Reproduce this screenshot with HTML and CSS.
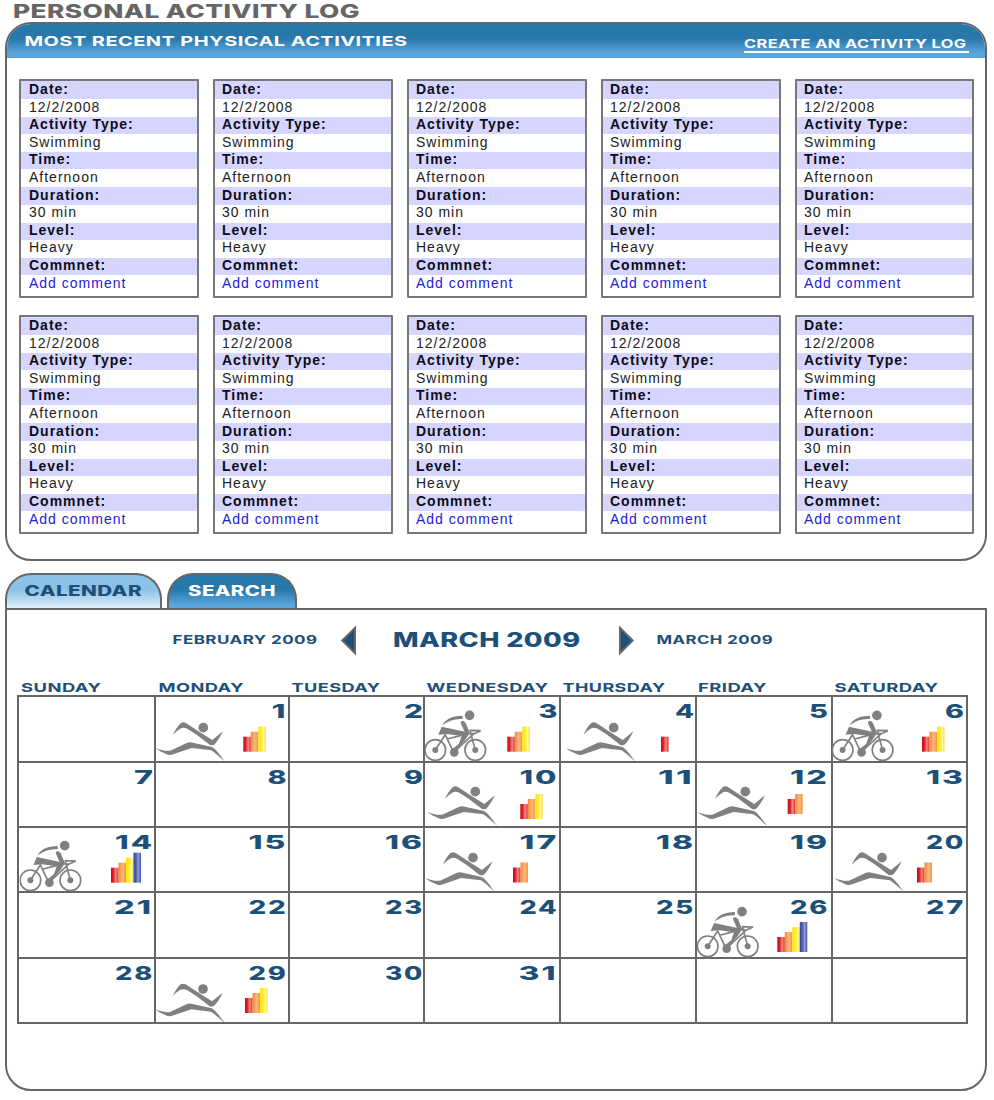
FILE: index.html
```html
<!DOCTYPE html>
<html lang="en">
<head>
<meta charset="utf-8">
<title>Personal Activity Log</title>
<link rel="stylesheet" href="styles.css">
</head>
<body>
<svg class="defs" width="0" height="0" aria-hidden="true">
  <defs>
    <linearGradient id="red"><stop offset="0" stop-color="#c01018"/><stop offset=".3" stop-color="#e01c22"/><stop offset=".65" stop-color="#f08a86"/><stop offset="1" stop-color="#dc2a2c"/></linearGradient>
    <linearGradient id="orange"><stop offset="0" stop-color="#f58634"/><stop offset=".55" stop-color="#fbb87c"/><stop offset="1" stop-color="#f59440"/></linearGradient>
    <linearGradient id="yellow"><stop offset="0" stop-color="#ffe60a"/><stop offset=".5" stop-color="#ffee38"/><stop offset=".7" stop-color="#fff6a8"/><stop offset="1" stop-color="#fbe03c"/></linearGradient>
    <linearGradient id="blue"><stop offset="0" stop-color="#3446a0"/><stop offset=".3" stop-color="#4c5cae"/><stop offset=".65" stop-color="#8e9ad0"/><stop offset="1" stop-color="#4355a8"/></linearGradient>
    <symbol id="swim" viewBox="466 96 210 120">
      <circle cx="610" cy="113" r="14.5"/>
      <path d="M519 134C526 120 534 107 543 99Q549 95 558 99L598 125L637 150L669 124C663 136 655 151 645 162Q638 168 629 164L590 134L562 116Q549 111 541 116Q529 123 519 134Z"/>
      <path d="M467 174C482 180 498 184 511 182L562 158Q570 155 579 158L636 171C652 180 662 200 676 215C660 204 650 191 634 181L575 174L522 192Q508 198 497 191C486 187 475 182 467 174Z"/>
    </symbol>
    <symbol id="bike" viewBox="28 60 190 155">
      <circle cx="164" cy="76" r="14.5"/>
      <path d="M82 105C92 88 110 77 143 77V87C120 85 104 91 82 105Z"/>
      <path d="M137 98Q137 91 146 93L152 99L164 127L152 133Z"/>
      <path d="M70 134L80 110L165 128L151 149L118 187L108 181L132 161L140 138L96 132Z"/>
      <g class="line"><circle cx="61" cy="180" r="31"/><circle cx="181" cy="180" r="31"/><path d="M61 180L91 134L116 187L177 131M97 147L139 136M165 121L181 180M164 121L197 122L178 131H160"/></g>
      <circle cx="61" cy="180" r="9"/><circle cx="181" cy="180" r="9"/><circle cx="118" cy="187" r="13"/>
    </symbol>
  </defs>
</svg>
<main>
  <h1 class="title"><svg width="346" height="14"><text class="wide fs-title" x="-1" y="13.5" textLength="347" lengthAdjust="spacingAndGlyphs">PERSONAL ACTIVITY LOG</text></svg></h1>
  <section class="panel">
    <header class="head">
      <svg width="382" height="10"><text class="wide fs-head" x="-1.5" y="9.7" textLength="383" lengthAdjust="spacingAndGlyphs">MOST RECENT PHYSICAL ACTIVITIES</text></svg>
      <a class="create"><svg width="225" height="9"><text class="wide fs-small" x="0" y="8" textLength="222.5" lengthAdjust="spacingAndGlyphs">CREATE AN ACTIVITY LOG</text></svg></a>
    </header>
    <div class="cards" id="cards"></div>
  </section>
  <nav class="tabs">
    <a class="tab tab-calendar"><svg width="117" height="11"><text class="wide fs-tab" x="-0.5" y="10" textLength="117.5" lengthAdjust="spacingAndGlyphs">CALENDAR</text></svg></a>
    <a class="tab tab-search"><svg width="87" height="11"><text class="wide fs-tab" x="-1" y="10" textLength="88" lengthAdjust="spacingAndGlyphs">SEARCH</text></svg></a>
  </nav>
  <section class="calendar">
    <div class="months">
      <svg class="prev" width="144" height="9"><text class="wide fs-small" x="-0.5" y="8" textLength="145" lengthAdjust="spacingAndGlyphs">FEBRUARY 2009</text></svg>
      <svg class="arrow" width="15" height="29"><path d="M1.3 14.5L14 1.8V27.2Z"/></svg>
      <svg class="current" width="186" height="15"><text class="wide fs-month" x="-1" y="14.3" textLength="187.5" lengthAdjust="spacingAndGlyphs">MARCH 2009</text></svg>
      <svg class="arrow" width="15" height="29"><path d="M13.7 14.5L1 1.8V27.2Z"/></svg>
      <svg class="next" width="115" height="9"><text class="wide fs-small" x="-0.5" y="8" textLength="116.5" lengthAdjust="spacingAndGlyphs">MARCH 2009</text></svg>
    </div>
    <div class="weekdays" id="weekdays"></div>
    <div class="days" id="days"></div>
  </section>
</main>
<script src="app.js"></script>
</body>
</html>
```
FILE: styles.css
```css
body { margin: 0; background: #fff; font-family: "Liberation Sans", Arial, sans-serif; }
main { width: 982px; padding-left: 5px; }
svg { display: block; overflow: visible; flex: none; }
.defs { position: absolute; }

.wide { font-family: Inter, "Liberation Sans", sans-serif; font-weight: 700; letter-spacing: 0.3px; fill: #1d5079; }
.fs-title { font-size: 18.6px; font-weight: 800; fill: #666; }
.fs-head { font-size: 13.4px; fill: #fff; }
.fs-small { font-size: 11.6px; }
.fs-tab { font-size: 14px; font-weight: 800; }
.fs-month { font-size: 20.2px; font-weight: 800; }
.fs-weekday { font-size: 12.4px; }
.fs-day { font-size: 19px; font-weight: 800; letter-spacing: 0; }
.fs-day.two { letter-spacing: 1.2px; }

.title { margin: 0; padding: 4px 0 4px 9px; }

.panel { box-sizing: border-box; height: 539px; border: 2px solid #666; border-radius: 26px; overflow: hidden; }
.head { display: flex; justify-content: space-between; align-items: flex-start; box-sizing: border-box; height: 34px; padding: 12px 16px 0 19px; background: linear-gradient(#2878ac 0%, #2878ac 42%, #5aa5db 85%, #5aa5db 100%); }
.create { margin-top: 4px; padding-bottom: 2px; border-bottom: 2px solid #fff; }
.create .wide { fill: #fff; }

.cards { display: grid; grid-template-columns: repeat(4, 180px) 179px; gap: 17px 14px; padding: 21px 0 0 12px; }
.card { box-sizing: border-box; height: 219px; margin: 0; border: 2px solid #777; border-radius: 1px; display: grid; grid-template-rows: 18px 18px 17px 18px 17px 18px 18px 18px 17px 18px 17px 21px; font-size: 14px; line-height: 17px; letter-spacing: 1px; color: #222; }
.card dt { padding-left: 7px; background: #d6d5ff; color: #0c0c18; font-weight: 700; }
.card dd { margin: 0; padding-left: 7px; }
.card:nth-child(5n + 1) dt, .card:nth-child(5n + 1) dd { padding-left: 8px; }
.card .raised { line-height: 15px; }
.card a { color: #2420d8; }

.tabs { display: flex; gap: 5px; height: 35px; margin-top: 12px; }
.tab { box-sizing: border-box; height: 35px; padding: 11px 0 0 18px; border: 2px solid #666; border-bottom: 0; border-radius: 26px 26px 0 0; }
.tab-calendar { width: 157px; background: linear-gradient(#8cc2e7 0%, #8cc2e7 45%, #dfeefa 100%); }
.tab-search { width: 130px; padding-left: 20px; background: linear-gradient(#2878ac 0%, #2878ac 45%, #5aa5db 90%); }
.tab-search .wide { fill: #fff; }

.calendar { box-sizing: border-box; height: 483px; border: 2px solid #666; border-radius: 0 0 26px 26px; padding-left: 10px; }
.months { display: flex; align-items: center; height: 61px; padding-left: 156px; }
.arrow { fill: #1d5079; stroke: #666; stroke-width: 2; }
.prev { margin-right: 24px; }
.current { margin: 0 39px 0 38px; }
.next { margin-left: 23px; }
.weekdays, .days { display: grid; grid-template-columns: 137px 134px 135px 136px 136px 136px 135px; }
.weekdays { height: 12px; padding: 12px 0 0 4px; }
.days { width: 949px; grid-template-rows: 66px 65px 65px 66px 65px; border-top: 2px solid #666; border-left: 2px solid #666; }
.day { border-right: 2px solid #666; border-bottom: 2px solid #666; }
.figure { fill: #808080; }
.line { fill: none; stroke: #808080; stroke-width: 5; }
```
FILE: app.js
```js
const fields = [
  ["Date:", "12/2/2008"], ["Activity Type:", "Swimming"], ["Time:", "Afternoon"],
  ["Duration:", "30 min"], ["Level:", "Heavy"], ["Commnet:", "<a>Add comment</a>"]
];
// rows whose text sits one pixel higher in its band
const raisedLabels = [1, 2, 4, 5];
const raisedValues = [3, 4];
const cls = (list, i) => (list.includes(i) ? ' class="raised"' : "");
const card = `<dl class="card">${fields.map(([k, v], i) =>
  `<dt${cls(raisedLabels, i)}>${k}</dt><dd${cls(raisedValues, i)}>${v}</dd>`).join("")}</dl>`;
document.getElementById("cards").innerHTML = card.repeat(10);

const wide = (cls, x, y, w, text) =>
  `<text class="wide ${cls}" x="${x}" y="${y}" textLength="${w}" lengthAdjust="spacingAndGlyphs">${text}</text>`;

// name, left inset, drawn width
const weekdays = [["SUNDAY", 0, 80.5], ["MONDAY", 0.5, 85.5], ["TUESDAY", -0.5, 89], ["WEDNESDAY", -0.5, 122],
  ["THURSDAY", -0.5, 103], ["FRIDAY", -1, 69], ["SATURDAY", -0.5, 104]];
document.getElementById("weekdays").innerHTML = weekdays
  .map(([name, x, w]) => `<svg width="${w}" height="9">${wide("fs-weekday", x, 8.8, w, name)}</svg>`).join("");

// figure: [symbol, x, y]; bars: [x, bottom, count], relative to the day cell
const events = {
  1: { figure: ["swim", -0.7, 25], bars: [87.3, 54.7, 3] },
  3: { figure: ["bike", -0.7, 13], bars: [82.3, 54.7, 3] },
  4: { figure: ["swim", 4.7, 25], bars: [100, 54.7, 1] },
  6: { figure: ["bike", -1.4, 13], bars: [89, 54.7, 3] },
  10: { figure: ["swim", 2.3, 23], bars: [95.3, 56, 3] },
  12: { figure: ["swim", 0.3, 23], bars: [90.7, 51, 2] },
  14: { figure: ["bike", 0.4, 12.3], bars: [92, 54.7, 4] },
  17: { figure: ["swim", 0, 24], bars: [88, 54.5, 2] },
  20: { figure: ["swim", 1, 24], bars: [84, 54.5, 2] },
  26: { figure: ["bike", -0.3, 13.3], bars: [80.3, 59, 4] },
  29: { figure: ["swim", -1, 24.3], bars: [89, 54, 3] }
};
const size = { swim: [70, 40], bike: [63.3, 51.7] };
const colors = ["red", "orange", "yellow", "blue"];
const numberRight = [133, 129.5, 132, 131.5, 132, 130, 130];

let html = "";
for (let i = 0; i < 35; i++) {
  const day = i <= 31 ? i : 0;
  let art = "";
  const event = events[day];
  if (event) {
    const [name, x, y] = event.figure;
    art += `<use class="figure" href="#${name}" x="${x}" y="${y}" width="${size[name][0]}" height="${size[name][1]}"/>`;
    const [bx, bottom, count] = event.bars;
    for (let b = 0; b < count; b++) {
      const h = 15 + b * 5;
      art += `<rect x="${bx + b * 7.5}" y="${bottom - h}" width="7.5" height="${h}" fill="url(#${colors[b]})"/>`;
    }
  }
  if (day) {
    const two = day > 9;
    const w = day === 1 ? 14 : !two ? 19 : day === 11 ? 36 : 39;
    const right = numberRight[i % 7] + (two ? 2 : 1) - (day % 10 === 1 ? 1 : 0);
    art += wide(two ? "fs-day two" : "fs-day", right - w, 20.8, w, day);
  }
  html += `<div class="day"><svg width="130" height="62">${art}</svg></div>`;
}
document.getElementById("days").innerHTML = html;
```
